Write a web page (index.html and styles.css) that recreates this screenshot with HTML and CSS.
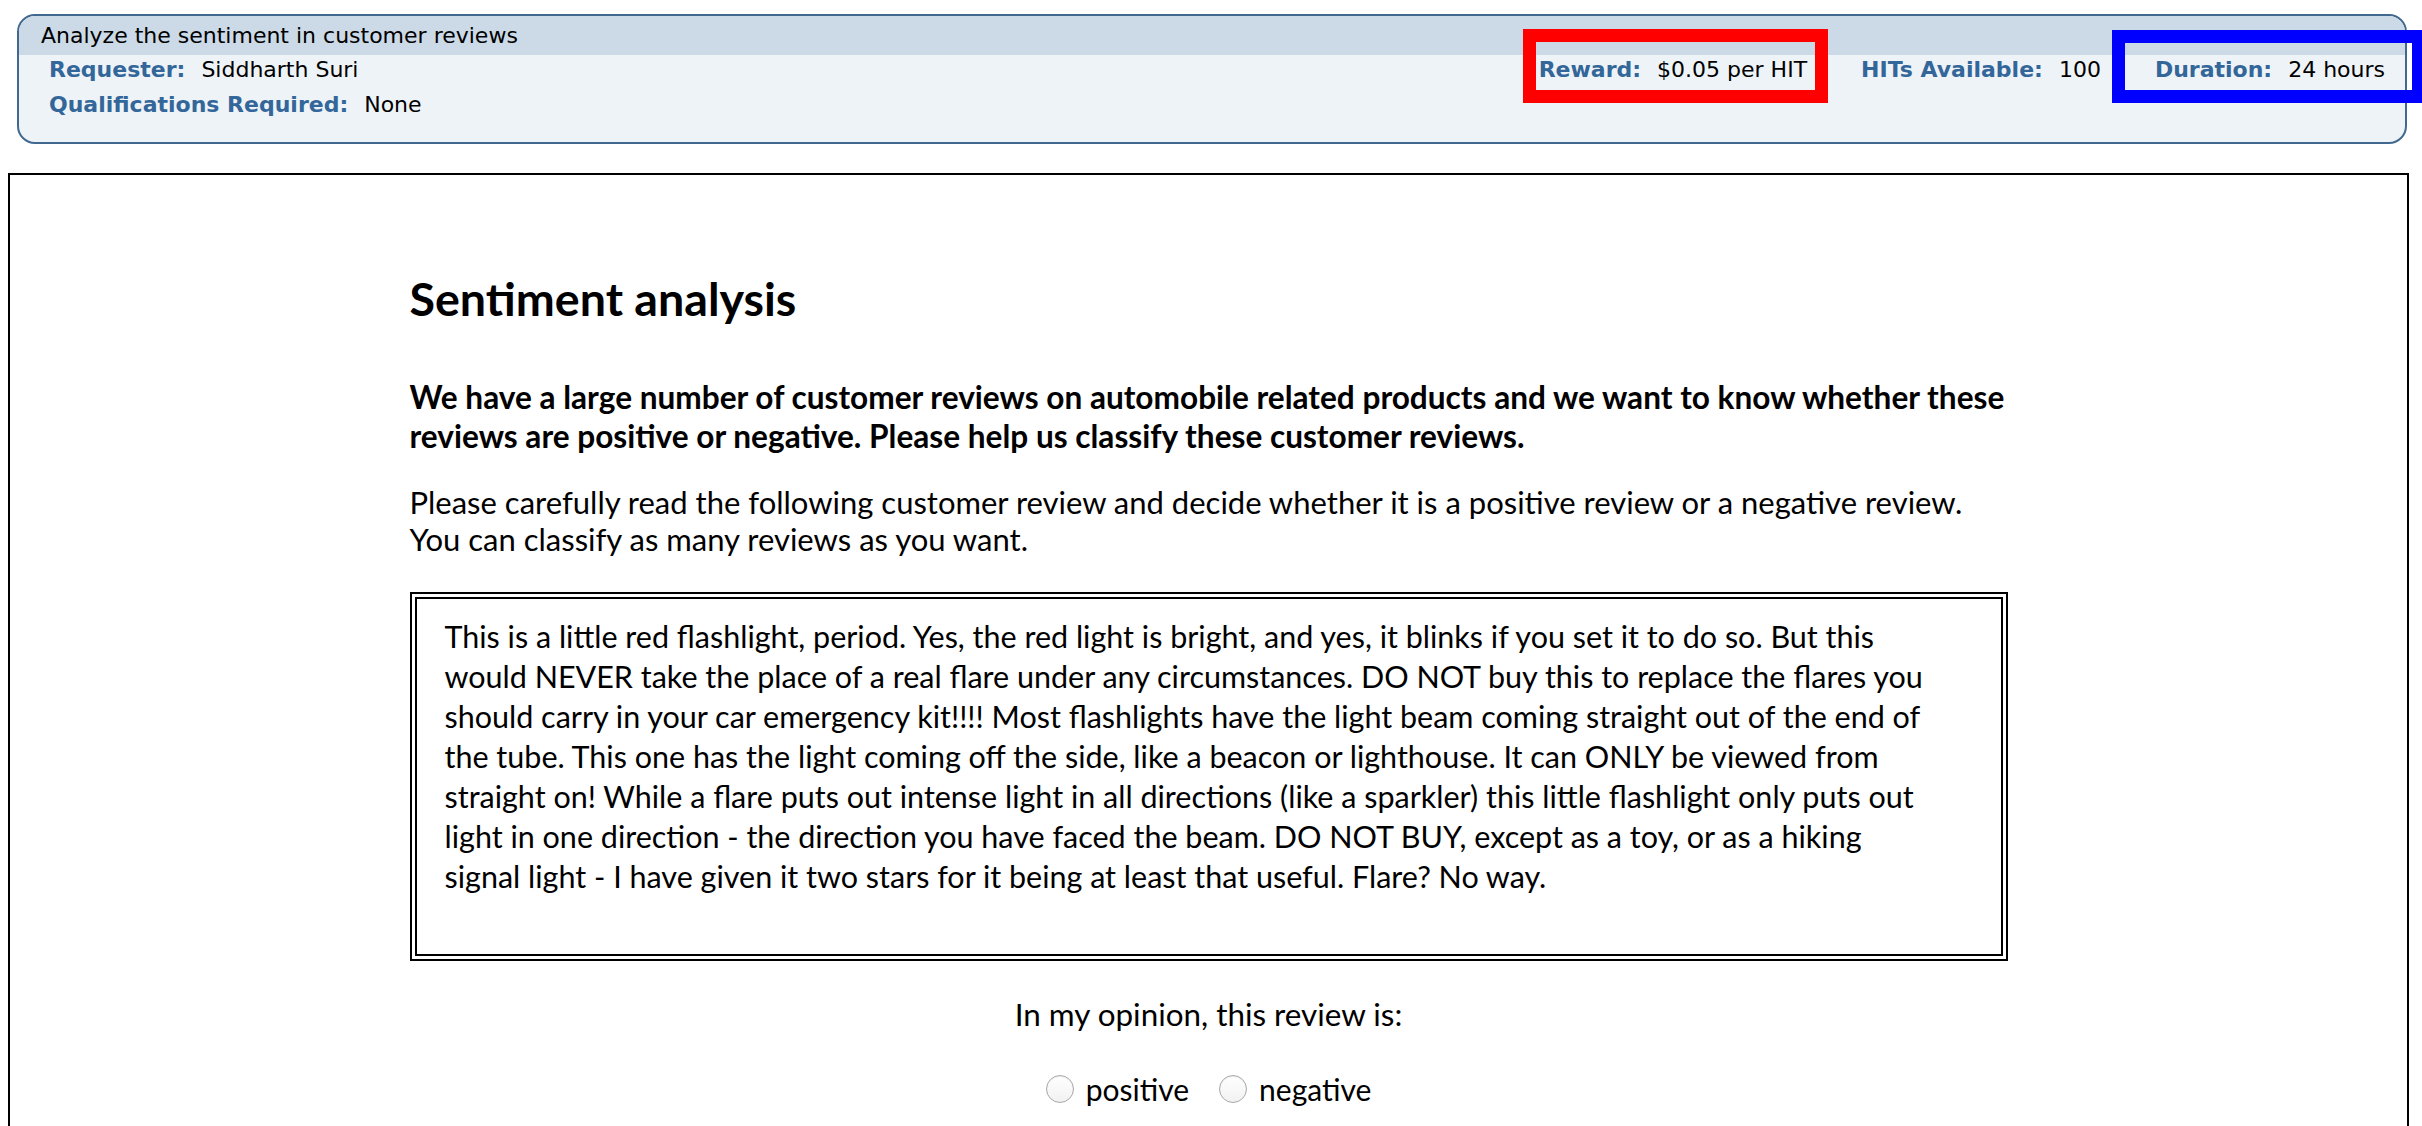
FILE: index.html
```html
<!DOCTYPE html>
<html lang="en">
<head>
<meta charset="utf-8">
<title>Sentiment analysis HIT</title>
<link rel="stylesheet" href="styles.css">
</head>
<body>
<div class="hit-box">
  <div class="hit-title">Analyze the sentiment in customer reviews</div>
  <div class="hit-body">
    <div class="hit-row">
      <div class="field"><span class="label">Requester:</span><span class="value">Siddharth Suri</span></div>
      <div class="right-fields">
        <div class="field"><span class="label">Reward:</span><span class="value">$0.05 per HIT</span><span class="mark mark-red"></span></div>
        <div class="field"><span class="label">HITs Available:</span><span class="value">100</span></div>
        <div class="field"><span class="label">Duration:</span><span class="value">24 hours</span><span class="mark mark-blue"></span></div>
      </div>
    </div>
    <div class="hit-row">
      <div class="field"><span class="label">Qualifications Required:</span><span class="value">None</span></div>
    </div>
  </div>
</div>

<div class="task-frame">
  <div class="task">
    <h1 class="task-title">Sentiment analysis</h1>
    <p class="intro">We have a large number of customer reviews on automobile related products and we want to know whether these reviews are positive or negative. Please help us classify these customer reviews.</p>
    <p class="instructions">Please carefully read the following customer review and decide whether it is a positive review or a negative review. You can classify as many reviews as you want.</p>
    <div class="review">This is a little red flashlight, period. Yes, the red light is bright, and yes, it blinks if you set it to do so. But this<br>
would NEVER take the place of a real flare under any circumstances. DO NOT buy this to replace the flares you<br>
should carry in your car emergency kit!!!! Most flashlights have the light beam coming straight out of the end of<br>
the tube. This one has the light coming off the side, like a beacon or lighthouse. It can ONLY be viewed from<br>
straight on! While a flare puts out intense light in all directions (like a sparkler) this little flashlight only puts out<br>
light in one direction - the direction you have faced the beam. DO NOT BUY, except as a toy, or as a hiking<br>
signal light - I have given it two stars for it being at least that useful. Flare? No way.</div>
    <p class="question">In my opinion, this review is:</p>
    <div class="choices">
      <label class="choice"><input type="radio" name="sentiment" value="positive"><span>positive</span></label>
      <label class="choice"><input type="radio" name="sentiment" value="negative"><span>negative</span></label>
    </div>
  </div>
</div>
</body>
</html>
```

FILE: styles.css
```css
html {
  overflow: hidden;
}
body {
  margin: 0;
  padding: 14px 0 0 0;
  background: #ffffff;
  font-family: "DejaVu Sans", Verdana, sans-serif;
  color: #000;
}

/* ---------- HIT summary box ---------- */
.hit-box {
  margin: 0 15px 0 17px;
  border: 2px solid #41698f;
  border-radius: 18px;
  background: #eef3f8;
  font-size: 22px;
}
.hit-title {
  height: 39px;
  line-height: 39px;
  padding-left: 22px;
  background: #cbdae6;
  border-radius: 16px 16px 0 0;
}
.hit-body {
  padding: 0 20px 22px 30px;
}
.hit-row {
  display: flex;
  align-items: flex-start;
  line-height: 30px;
}
.hit-row + .hit-row {
  margin-top: 5px;
}
.right-fields {
  margin-left: auto;
  display: flex;
  gap: 54px;
}
.field {
  position: relative;
  white-space: nowrap;
}
.label {
  font-weight: bold;
  color: #336699;
  margin-right: 16px;
}
.mark {
  position: absolute;
  border-width: 13px;
  border-style: solid;
  pointer-events: none;
}
.mark-red {
  border-color: #ff0000;
  left: -16px;
  right: -21px;
  top: -26px;
  bottom: -18px;
}
.mark-blue {
  border-color: #0000ff;
  left: -43px;
  right: -40px;
  top: -25px;
  bottom: -18px;
}

/* ---------- Task frame ---------- */
.task-frame {
  margin: 29px 13px 0 8px;
  border: 2px solid #000;
  padding: 95px 0 200px 0;
  font-family: Lato, "Open Sans", sans-serif;
}
.task {
  width: 1598px;
  margin: 0 auto;
}
.task-title {
  margin: 0;
  font-size: 46.6px;
  line-height: 56px;
  font-weight: bold;
}
.intro {
  margin: 52px 0 0 0;
  font-size: 31.6px;
  line-height: 39px;
  font-weight: bold;
}
.instructions {
  margin: 28px 0 0 0;
  font-size: 31px;
  line-height: 37px;
}
.review {
  margin-top: 34px;
  border: 7px double #000;
  padding: 17px 16px 58px 28px;
  font-size: 30.5px;
  line-height: 40px;
  white-space: nowrap;
}
.question {
  margin: 35px 0 0 0;
  text-align: center;
  font-size: 31.4px;
  line-height: 36px;
}
.choices {
  margin-top: 39px;
  display: flex;
  justify-content: center;
  gap: 30px;
  font-size: 30px;
  line-height: 36px;
}
.choice {
  display: flex;
  align-items: center;
  gap: 12px;
}
.choice input {
  appearance: none;
  -webkit-appearance: none;
  margin: 0;
  width: 28px;
  height: 28px;
  border-radius: 50%;
  border: 1px solid #a9a9a9;
  background: linear-gradient(#ffffff, #f1f1f1);
  box-shadow: inset 0 1px 1px rgba(0,0,0,0.08);
}
```
